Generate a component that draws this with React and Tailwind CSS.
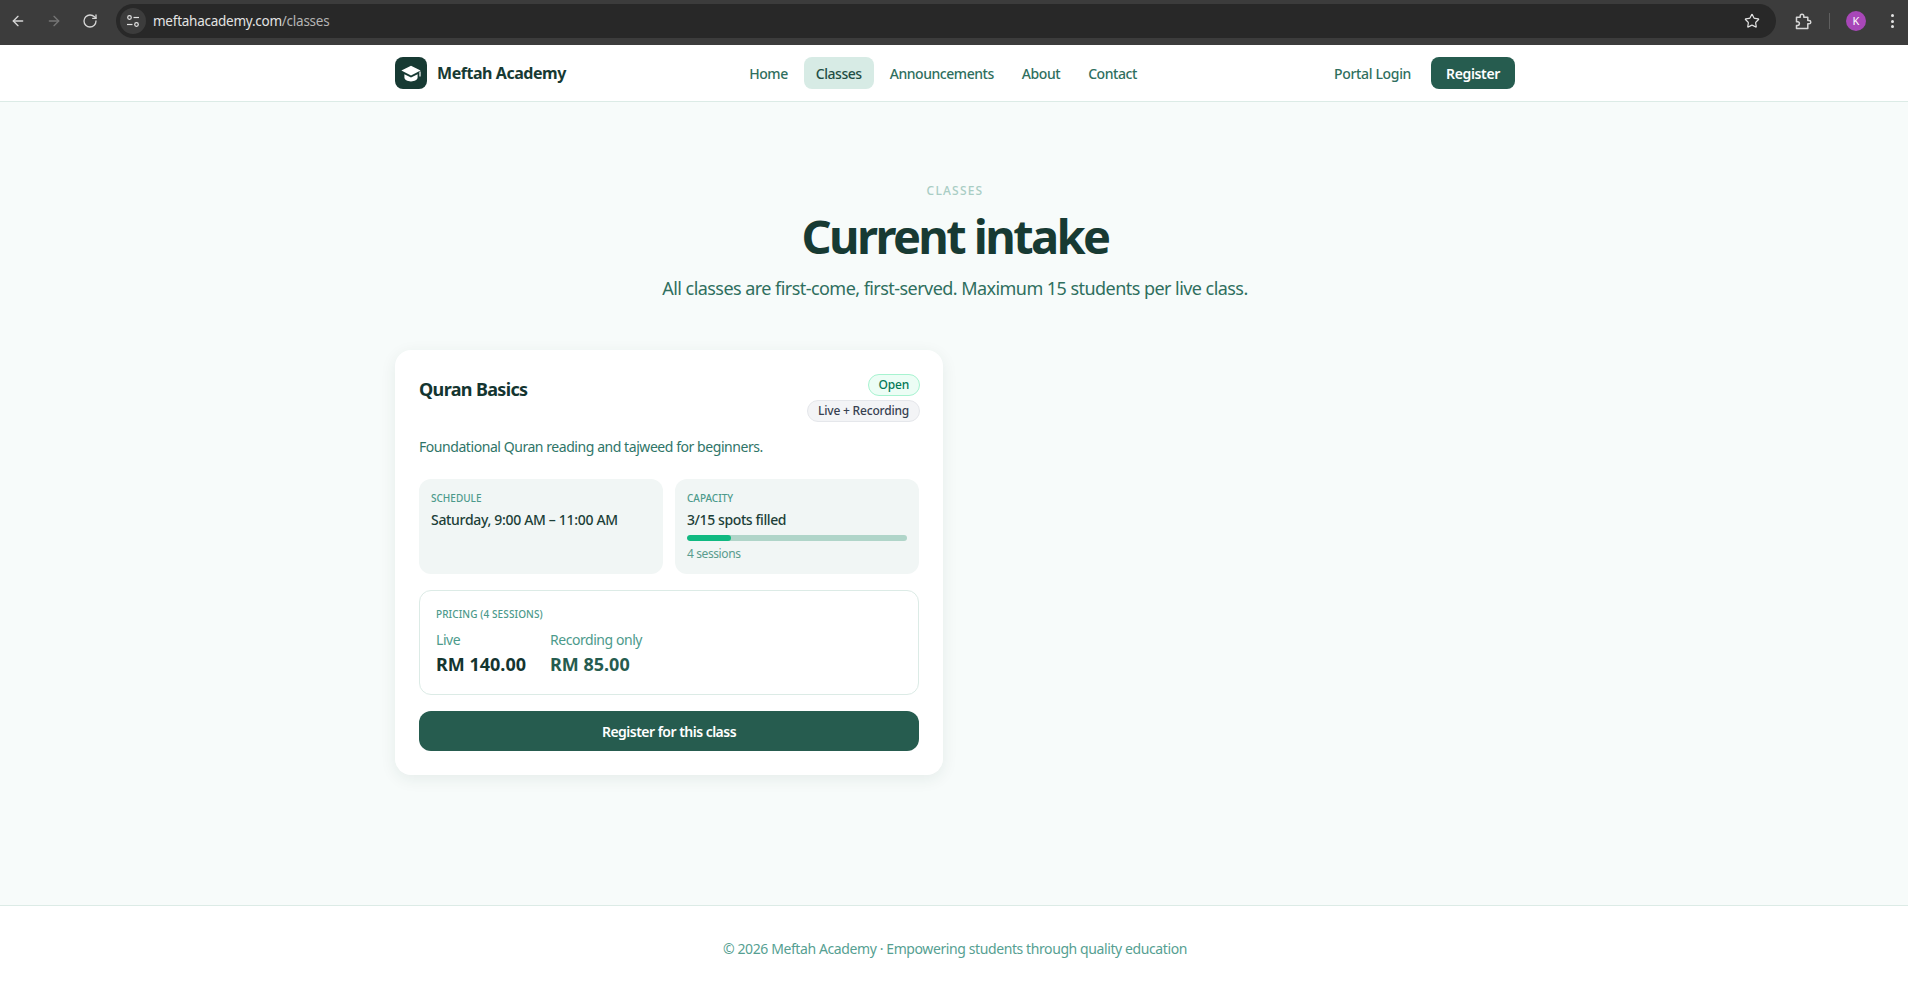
import React from "react";
import { ArrowLeft, ArrowRight, RotateCw, Star } from "lucide-react";

function Tune() {
  return (
    <svg width="14" height="14" viewBox="0 0 14 14" fill="none" stroke="#e3e3e3" strokeWidth="1.2">
      <circle cx="3.5" cy="3.5" r="1.8" />
      <path d="M7.5 3.5H13" />
      <circle cx="10.5" cy="10.5" r="1.8" />
      <path d="M1 10.5H6.5" />
    </svg>
  );
}

function ExtensionIcon() {
  return (
    <svg width="17" height="17" viewBox="0 0 17 17" fill="none" stroke="#d6d6d6" strokeWidth="1.5" strokeLinejoin="round">
      <path d="M1.5 4.2H5.2V3C5.2 1.9 6 1.2 7 1.2C8 1.2 8.8 1.9 8.8 3V4.2H12.8V7.6H14C15 7.6 15.8 8.3 15.8 9.2C15.8 10.1 15 10.8 14 10.8H12.8V15.5H1.5V12.4H2.6C3.6 12.4 4.4 11.6 4.4 10.6C4.4 9.6 3.6 8.8 2.6 8.8H1.5Z" />
    </svg>
  );
}

function Cap() {
  return (
    <svg width="20" height="17" viewBox="0 0 20 17" fill="#ffffff">
      <path d="M10 0.8L19.6 5.6L10 10.4L0.4 5.6Z" />
      <path d="M3.4 9.2L10 12.5L16.6 9.2V12.6C16.6 14.8 13.6 16.4 10 16.4C6.4 16.4 3.4 14.8 3.4 12.6Z" />
      <path d="M18.4 6.4H19.6V11.6H18.4Z" />
    </svg>
  );
}

function Chrome() {
  return (
    <div className="h-[45px] bg-[#3c3c3c] flex items-center pb-[3px] shrink-0">
      <div className="w-[116px] flex items-center text-[#d6d6d6] shrink-0">
        <ArrowLeft size={16} strokeWidth={2} className="ml-[10px]" />
        <ArrowRight size={16} strokeWidth={2} className="ml-[20px] text-[#757575]" />
        <RotateCw size={16} strokeWidth={2} className="ml-[20px]" />
      </div>
      <div className="h-[34px] w-[1660px] rounded-full bg-[#282828] flex items-center pl-[4px] pr-[16px] shrink-0">
        <div className="w-[26px] h-[26px] rounded-full bg-[#3c3c3c] flex items-center justify-center">
          <Tune />
        </div>
        <div className="ml-[7px] text-[13.5px] text-[#e3e3e3] tracking-[-0.25px]">
          meftahacademy.com<span className="text-[#b5b5b5]">/classes</span>
        </div>
        <Star size={16} strokeWidth={1.8} className="ml-auto text-[#e3e3e3]" />
      </div>
      <div className="ml-[19px] flex">
        <ExtensionIcon />
      </div>
      <div className="ml-[17px] w-px h-[16px] bg-[#5f5f5f]" />
      <div className="ml-[16px] w-[20px] h-[20px] rounded-full bg-[#a847b8] flex items-center justify-center text-[11px] text-white">K</div>
      <div className="ml-[25px] flex flex-col gap-[2.5px]">
        <div className="w-[3px] h-[3px] rounded-full bg-[#e3e3e3]" />
        <div className="w-[3px] h-[3px] rounded-full bg-[#e3e3e3]" />
        <div className="w-[3px] h-[3px] rounded-full bg-[#e3e3e3]" />
      </div>
    </div>
  );
}

function Nav() {
  return (
    <header className="h-[57px] bg-white border-b border-[#dcebe6] shrink-0">
      <div className="w-[1120px] ml-[395px] h-full flex items-center justify-between">
        <div className="flex items-center gap-[10px]">
          <div className="w-8 h-8 rounded-lg bg-[#173a33] flex items-center justify-center">
            <Cap />
          </div>
          <span className="text-[16px] font-bold text-[#173a33] tracking-[-0.45px]">Meftah Academy</span>
        </div>
        <nav className="flex items-center gap-1 mr-[14px] text-[14px] font-medium text-[#2f6f5e] tracking-[-0.45px]">
          <a className="h-8 px-3 flex items-center rounded-lg">Home</a>
          <a className="h-8 px-3 flex items-center rounded-lg bg-[#d7ebe5] text-[#1f4f45]">Classes</a>
          <a className="h-8 px-3 flex items-center rounded-lg">Announcements</a>
          <a className="h-8 px-3 flex items-center rounded-lg">About</a>
          <a className="h-8 px-3 flex items-center rounded-lg">Contact</a>
        </nav>
        <div className="flex items-center gap-5 text-[14px] font-medium tracking-[-0.35px]">
          <a className="text-[#2f6f5e]">Portal Login</a>
          <a className="h-8 w-[84px] flex items-center justify-center rounded-lg bg-[#265c4f] text-white font-semibold">Register</a>
        </div>
      </div>
    </header>
  );
}

function Card() {
  return (
    <div className="w-[548px] bg-white rounded-2xl shadow-[0_4px_16px_rgba(20,60,50,0.08)] p-6">
      <div className="flex justify-between items-start">
        <h3 className="text-[18px] font-bold text-[#143530] mt-[2px] tracking-[-0.65px]">Quran Basics</h3>
        <div className="flex flex-col items-end gap-1 -mr-px">
          <span className="h-[22px] px-[10px] flex items-center rounded-full border border-[#a7f3d0] bg-[#ecfdf5] text-[12px] font-medium text-[#047857] tracking-[-0.2px]">Open</span>
          <span className="h-[22px] px-[10px] flex items-center rounded-full border border-[#e5e7eb] bg-[#f3f4f6] text-[12px] font-medium text-[#374151] tracking-[-0.2px]">Live + Recording</span>
        </div>
      </div>
      <p className="mt-[14px] text-[14px] text-[#2f7568] tracking-[-0.44px]">Foundational Quran reading and tajweed for beginners.</p>
      <div className="mt-[22px] grid grid-cols-2 gap-3">
        <div className="h-[95px] rounded-xl bg-[#f1f6f5] p-3">
          <div className="text-[10px] leading-[15px] font-medium uppercase text-[#4c9a8b]">Schedule</div>
          <div className="mt-[3px] text-[14px] font-medium text-[#1c3f38] tracking-[-0.32px]">Saturday, 9:00 AM – 11:00 AM</div>
        </div>
        <div className="h-[95px] rounded-xl bg-[#f1f6f5] p-3">
          <div className="text-[10px] leading-[15px] font-medium uppercase text-[#4c9a8b]">Capacity</div>
          <div className="mt-[3px] text-[14px] font-medium text-[#1c3f38] tracking-[-0.4px]">3/15 spots filled</div>
          <div className="mt-[5px] h-[6px] rounded-full bg-[#b0d5c9] overflow-hidden">
            <div className="h-full w-1/5 rounded-full bg-[#10b981]" />
          </div>
          <div className="mt-[4px] text-[12px] text-[#5a9c8e] tracking-[-0.4px]">4 sessions</div>
        </div>
      </div>
      <div className="mt-4 rounded-xl border border-[#dcebe6] p-4 h-[105px]">
        <div className="text-[10px] leading-[15px] font-medium uppercase text-[#4c9a8b] tracking-[0.1px]">Pricing (4 sessions)</div>
        <div className="mt-[7px] flex gap-6">
          <div>
            <div className="text-[14px] text-[#4c9a8b] tracking-[-0.45px]">Live</div>
            <div className="mt-[1px] text-[18px] font-bold text-[#143530]">RM 140.00</div>
          </div>
          <div>
            <div className="text-[14px] text-[#4c9a8b] tracking-[-0.45px]">Recording only</div>
            <div className="mt-[1px] text-[18px] font-bold text-[#265c4f]">RM 85.00</div>
          </div>
        </div>
      </div>
      <a className="mt-4 h-10 rounded-xl bg-[#265c4f] flex items-center justify-center text-[14px] font-semibold text-white tracking-[-0.52px]">Register for this class</a>
    </div>
  );
}

export default function App() {
  return (
    <div className="h-[983px] flex flex-col bg-[#f7fbfa] font-['Noto_Sans',sans-serif] overflow-hidden">
      <Chrome />
      <Nav />
      <main className="flex-1 w-[1120px] ml-[395px]">
        <div className="mt-[81px] text-center">
          <div className="text-[12px] leading-4 font-medium tracking-[1.2px] uppercase text-[#a9cdc4]">Classes</div>
          <h1 className="mt-[13px] text-[47px] leading-[48px] font-bold text-[#173a33] tracking-[-2.6px]">Current intake</h1>
          <p className="mt-[14px] text-[18px] leading-7 text-[#2f6f5e] tracking-[-0.55px]">All classes are first-come, first-served. Maximum 15 students per live class.</p>
        </div>
        <div className="mt-[48px]">
          <Card />
        </div>
      </main>
      <footer className="h-[78px] bg-white border-t border-[#dcebe6] pl-[2px] pt-[7px] flex items-center justify-center text-[14px] text-[#569f92] tracking-[-0.4px] shrink-0">
        © 2026 Meftah Academy · Empowering students through quality education
      </footer>
    </div>
  );
}
